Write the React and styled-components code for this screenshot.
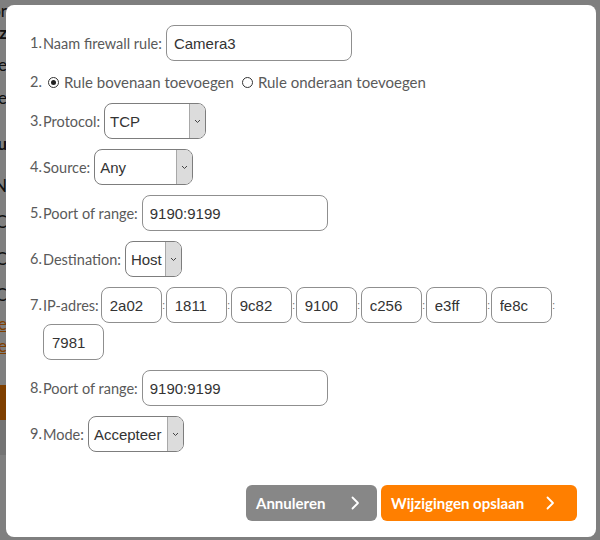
import React from 'react';
import styled, { createGlobalStyle } from 'styled-components';

const Global = createGlobalStyle`
  html, body { margin: 0; padding: 0; background: #fff; }
  body { width: 600px; height: 540px; overflow: hidden; font-family: Lato, "Open Sans", sans-serif; }
`;

const Page = styled.div`
  position: relative;
  width: 600px;
  height: 540px;
  overflow: hidden;
  background: #fff;
`;

const BgColumn = styled.div`
  width: 7px;
  display: flex;
  flex-direction: column;
  overflow: hidden;
`;

const BgLine = styled.div`
  height: 20px;
  margin-top: ${p => p.$mt}px;
  display: flex;
  justify-content: flex-end;
  align-items: center;
  white-space: nowrap;
  font-family: Lato, sans-serif;
  font-size: 17px;
  font-weight: ${p => (p.$bold ? 700 : 400)};
  color: ${p => (p.$orange ? '#ff7f00' : '#222')};
  text-decoration: ${p => (p.$orange ? 'underline' : 'none')};
`;

const BgBar = styled.div`
  height: 35px;
  margin-top: ${p => p.$mt || 0}px;
  background: ${p => p.$color};
`;

const Overlay = styled.div`
  position: absolute;
  inset: 0;
  background: rgba(0, 0, 0, 0.5);
`;

const Modal = styled.div`
  position: absolute;
  top: 5px;
  left: 6px;
  width: 590px;
  height: 532px;
  box-sizing: border-box;
  background: #fff;
  border-radius: 8px;
  padding: 20px 19px 0 24px;
`;

const Form = styled.div`
  display: flex;
  flex-direction: column;
  gap: 10px;
`;

const Row = styled.div`
  display: grid;
  grid-template-columns: 13px 1fr;
  align-items: start;
`;

const Num = styled.span`
  font-size: 14.5px;
  line-height: ${p => p.$lh || 36}px;
  color: #5a5a5a;
  white-space: nowrap;
`;

const Field = styled.div`
  display: flex;
  flex-wrap: wrap;
  align-items: center;
  column-gap: ${p => p.$gap ?? 4}px;
  row-gap: 1px;
  min-height: ${p => p.$h || 36}px;
`;

const Label = styled.span`
  font-size: 14.5px;
  color: #5a5a5a;
  white-space: nowrap;
  margin-right: ${p => p.$mr || 0}px;
`;

const TextInput = styled.input`
  width: ${p => p.$w}px;
  height: 36px;
  box-sizing: border-box;
  border: 1px solid #8f8f8f;
  border-radius: 8px;
  padding: 0 0 0 ${p => p.$pl || 7}px;
  font-family: "Liberation Sans", Arial, sans-serif;
  font-size: 15px;
  color: #333;
  background: #fff;
  outline: none;
`;

const Select = styled.div`
  width: ${p => p.$w}px;
  height: 36px;
  box-sizing: border-box;
  border: 1px solid #7d7d7d;
  border-radius: 8px;
  display: flex;
  overflow: hidden;
  background: #fff;
`;

const SelectValue = styled.span`
  flex: 1;
  padding-left: 5px;
  display: flex;
  align-items: center;
  font-family: "Liberation Sans", Arial, sans-serif;
  font-size: 15px;
  color: #333;
  white-space: nowrap;
  overflow: hidden;
`;

const SelectArrow = styled.span`
  width: 15px;
  border-left: 1px solid #a8a8a8;
  background: #dcdcdc;
  display: flex;
  align-items: center;
  justify-content: center;
`;

const RadioGroup = styled.label`
  display: flex;
  align-items: center;
  gap: 5px;
  margin-left: ${p => p.$ml || 0}px;
  font-size: 15px;
  color: #5a5a5a;
  white-space: nowrap;
`;

const RadioDot = styled.span`
  width: 11px;
  height: 11px;
  box-sizing: border-box;
  border: 1.3px solid #333;
  border-radius: 50%;
  display: flex;
  align-items: center;
  justify-content: center;
  &::after {
    content: '';
    width: 5px;
    height: 5px;
    border-radius: 50%;
    background: ${p => (p.$checked ? '#222' : 'transparent')};
  }
`;

const IpPart = styled.span`
  display: flex;
  align-items: center;
`;

const Colon = styled.span`
  width: 4px;
  text-align: center;
  font-family: "Liberation Sans", Arial, sans-serif;
  font-size: 10px;
  color: #666;
`;

const Buttons = styled.div`
  display: flex;
  justify-content: flex-end;
  gap: 4px;
  margin-top: 33px;
`;

const Button = styled.button`
  width: ${p => p.$w}px;
  height: 36px;
  border: none;
  border-radius: 6px;
  background: ${p => (p.$primary ? '#ff7f00' : '#878787')};
  color: #fff;
  font-family: Lato, sans-serif;
  font-weight: 700;
  font-size: 15px;
  display: flex;
  align-items: center;
  justify-content: space-between;
  padding: 0 ${p => p.$pr}px 0 10px;
  cursor: pointer;
`;

const Chevron = () => (
  <svg width="9" height="14" viewBox="0 0 9 14" fill="none">
    <polyline points="1.5,1.5 7,7 1.5,12.5" stroke="#fff" strokeWidth="1.8" strokeLinecap="round" strokeLinejoin="round" />
  </svg>
);

const SmallChevron = () => (
  <svg width="7" height="5" viewBox="0 0 7 5" fill="none">
    <polyline points="1,1 3.5,3.5 6,1" stroke="#444" strokeWidth="1" />
  </svg>
);

const Dropdown = ({ w, value }) => (
  <Select $w={w}>
    <SelectValue>{value}</SelectValue>
    <SelectArrow><SmallChevron /></SelectArrow>
  </Select>
);

const bgLines = [
  { t: 'Voor', mt: 0 },
  { t: 'Regelz', mt: 2, bold: true },
  { t: 'Rule', mt: 12 },
  { t: 'Rule', mt: 13 },
  { t: 'Nu', mt: 26, bold: true },
  { t: 'AN', mt: 22 },
  { t: 'C', mt: 16 },
  { t: 'C', mt: 17 },
  { t: 'C', mt: 16 },
  { t: 'Wijzige', mt: 9, orange: true },
  { t: 'Verwijde', mt: 2, orange: true },
];

const ipParts = ['2a02', '1811', '9c82', '9100', 'c256', 'e3ff', 'fe8c', '7981'];

export default function App() {
  return (
    <Page>
      <Global />
      <BgColumn>
        {bgLines.map((l, i) => (
          <BgLine key={i} $mt={l.mt} $bold={l.bold} $orange={l.orange}>{l.t}</BgLine>
        ))}
        <BgBar $color="#ff7f00" $mt={30} />
        <BgBar $color="#e8e8e8" />
      </BgColumn>
      <Overlay />
      <Modal>
        <Form>
          <Row>
            <Num>1.</Num>
            <Field>
              <Label>Naam firewall rule:</Label>
              <TextInput $w={186} defaultValue="Camera3" readOnly />
            </Field>
          </Row>
          <Row>
            <Num $lh={22}>2.</Num>
            <Field $h={22} $gap={0}>
              <RadioGroup $ml={5}><RadioDot $checked />Rule bovenaan toevoegen</RadioGroup>
              <RadioGroup $ml={8}><RadioDot />Rule onderaan toevoegen</RadioGroup>
            </Field>
          </Row>
          <Row>
            <Num>3.</Num>
            <Field>
              <Label>Protocol:</Label>
              <Dropdown w={102} value="TCP" />
            </Field>
          </Row>
          <Row>
            <Num>4.</Num>
            <Field>
              <Label>Source:</Label>
              <Dropdown w={99} value="Any" />
            </Field>
          </Row>
          <Row>
            <Num>5.</Num>
            <Field>
              <Label>Poort of range:</Label>
              <TextInput $w={186} defaultValue="9190:9199" readOnly />
            </Field>
          </Row>
          <Row>
            <Num>6.</Num>
            <Field>
              <Label>Destination:</Label>
              <Dropdown w={57} value="Host" />
            </Field>
          </Row>
          <Row>
            <Num>7.</Num>
            <Field $gap={0}>
              <Label $mr={2}>IP-adres:</Label>
              {ipParts.map((p, i) => (
                <IpPart key={i}>
                  <TextInput $w={61} $pl={8} defaultValue={p} readOnly />
                  {i < ipParts.length - 1 && <Colon>:</Colon>}
                </IpPart>
              ))}
            </Field>
          </Row>
          <Row>
            <Num>8.</Num>
            <Field>
              <Label>Poort of range:</Label>
              <TextInput $w={186} defaultValue="9190:9199" readOnly />
            </Field>
          </Row>
          <Row>
            <Num>9.</Num>
            <Field>
              <Label>Mode:</Label>
              <Dropdown w={96} value="Accepteer" />
            </Field>
          </Row>
        </Form>
        <Buttons>
          <Button $w={131} $pr={17}>Annuleren<Chevron /></Button>
          <Button $w={196} $pr={22} $primary>Wijzigingen opslaan<Chevron /></Button>
        </Buttons>
      </Modal>
    </Page>
  );
}
